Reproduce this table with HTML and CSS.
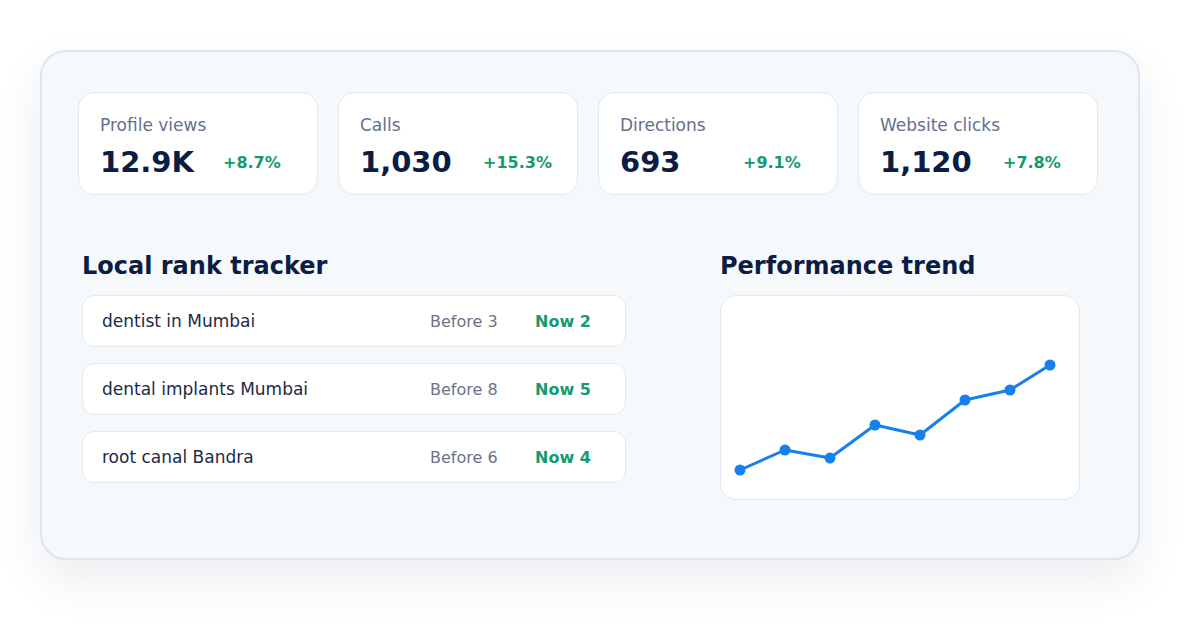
FILE: index.html
```html
<!DOCTYPE html>
<html lang="en">
<head>
<meta charset="utf-8">
<title>Dashboard</title>
<link rel="stylesheet" href="styles.css">
</head>
<body>
<div class="panel">
  <div class="stats">
    <div class="stat">
      <div class="stat-label">Profile views</div>
      <div class="stat-row"><span class="stat-value">12.9K</span><span class="stat-delta">+8.7%</span></div>
    </div>
    <div class="stat">
      <div class="stat-label">Calls</div>
      <div class="stat-row"><span class="stat-value">1,030</span><span class="stat-delta">+15.3%</span></div>
    </div>
    <div class="stat">
      <div class="stat-label">Directions</div>
      <div class="stat-row"><span class="stat-value">693</span><span class="stat-delta">+9.1%</span></div>
    </div>
    <div class="stat">
      <div class="stat-label">Website clicks</div>
      <div class="stat-row"><span class="stat-value">1,120</span><span class="stat-delta">+7.8%</span></div>
    </div>
  </div>
  <div class="lower">
    <section class="ranks">
      <h2 class="section-title">Local rank tracker</h2>
      <div class="rank-list">
        <div class="rank-row"><span class="kw">dentist in Mumbai</span><span class="before">Before 3</span><span class="now">Now 2</span></div>
        <div class="rank-row"><span class="kw">dental implants Mumbai</span><span class="before">Before 8</span><span class="now">Now 5</span></div>
        <div class="rank-row"><span class="kw">root canal Bandra</span><span class="before">Before 6</span><span class="now">Now 4</span></div>
      </div>
    </section>
    <section class="trend">
      <h2 class="section-title">Performance trend</h2>
      <div class="chart">
        <svg class="chart-svg" viewBox="0 0 358 203" width="358" height="203">
          <polyline points="19,174 64,154 109,162 154,129 199,139 244,104 289,94 329,69" fill="none" stroke="#1580ee" stroke-width="3" stroke-linejoin="round" stroke-linecap="round"/>
          <g fill="#1580ee">
            <circle cx="19" cy="174" r="5.5"/>
            <circle cx="64" cy="154" r="5.5"/>
            <circle cx="109" cy="162" r="5.5"/>
            <circle cx="154" cy="129" r="5.5"/>
            <circle cx="199" cy="139" r="5.5"/>
            <circle cx="244" cy="104" r="5.5"/>
            <circle cx="289" cy="94" r="5.5"/>
            <circle cx="329" cy="69" r="5.5"/>
          </g>
        </svg>
      </div>
    </section>
  </div>
</div>
</body>
</html>
```
FILE: styles.css
```css
* { box-sizing: border-box; }
html, body {
  margin: 0;
  padding: 0;
  background: #ffffff;
}
body {
  font-family: "DejaVu Sans", Verdana, sans-serif;
  width: 1200px;
  height: 630px;
  overflow: hidden;
  padding-top: 50px;
  padding-left: 40px;
}
.panel {
  width: 1100px;
  height: 510px;
  background: #f6f9fc;
  border: 2px solid #dce5f0;
  border-radius: 26px;
  box-shadow: 0 20px 48px rgba(30, 50, 90, 0.09);
  padding: 40px 40px 0 36px;
}
.stats {
  display: grid;
  grid-template-columns: repeat(4, 240px);
  column-gap: 20px;
}
.stat {
  height: 103px;
  background: #ffffff;
  border: 1px solid #e1e8f0;
  border-radius: 16px;
  padding: 22px 20px 0 21px;
}
.stat-label {
  font-size: 17px;
  line-height: 20px;
  color: #64708a;
}
.stat-row {
  display: flex;
  align-items: center;
  margin-top: 9px;
}
.stat-value {
  width: 123px;
  font-size: 29px;
  line-height: 36px;
  font-weight: bold;
  color: #0b1d45;
}
.stat-delta {
  font-size: 16px;
  font-weight: bold;
  color: #159a6a;
}
.lower {
  display: grid;
  grid-template-columns: 544px 360px;
  column-gap: 94px;
  margin-top: 56px;
  padding-left: 4px;
}
.section-title {
  margin: 0 0 14px 0;
  font-size: 24px;
  line-height: 30px;
  font-weight: bold;
  color: #0b1d45;
}
.rank-list {
  display: flex;
  flex-direction: column;
  gap: 16px;
}
.rank-row {
  display: flex;
  align-items: center;
  height: 52px;
  background: #ffffff;
  border: 1px solid #e1e8f0;
  border-radius: 12px;
  padding: 0 20px 0 19px;
}
.kw {
  flex: 1;
  font-size: 17px;
  color: #1b2a45;
}
.before {
  width: 105px;
  font-size: 16px;
  color: #6b7388;
}
.now {
  width: 70px;
  font-size: 16px;
  font-weight: bold;
  color: #159a6a;
}
.chart {
  width: 360px;
  height: 205px;
  background: #ffffff;
  border: 1px solid #e1e8f0;
  border-radius: 16px;
  overflow: hidden;
}
.chart-svg {
  display: block;
}
```
